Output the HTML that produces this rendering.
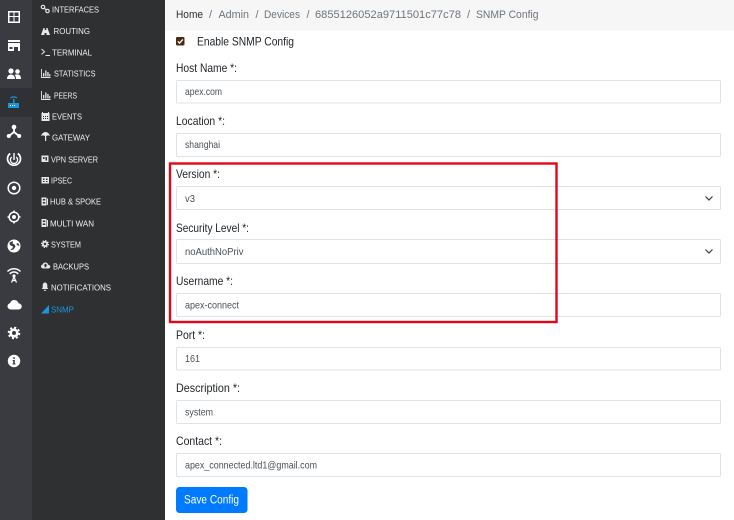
<!DOCTYPE html>
<html><head><meta charset="utf-8"><title>SNMP Config</title>
<style>
html,body{margin:0;padding:0;width:734px;height:520px;overflow:hidden;background:#fff}
svg{display:block}
text{font-family:"Liberation Sans",sans-serif}
.m{font-size:8.6px;fill:#f0f0f0}
.b{font-size:11px;fill:#6c757d}
.l{font-size:11.6px;fill:#212529}
.v{font-size:10.2px;fill:#495057}
.i{fill:#fff;stroke:#dfe3e8;stroke-width:1}
</style></head><body>
<svg width="734" height="520" viewBox="0 0 734 520" xmlns="http://www.w3.org/2000/svg">
<rect width="734" height="520" fill="#fff"/>
<rect x="0" y="0" width="32" height="520" fill="#3a3b40"/>
<rect x="32" y="0" width="133" height="520" fill="#2f3032"/>
<rect x="0" y="88" width="32" height="29" fill="#303134"/>

<!-- rail icons -->
<g fill="#fff">
<path fill-rule="evenodd" d="M8 11h12v12H8zM9.500 12.500v3.500h4v-3.500zM14.500 12.500v3.500h4v-3.500zM9.500 17v4.500h4V17zM14.500 17v4.500h4V17z"/>
<path fill-rule="evenodd" d="M8 40h12v2H8zM8 43h12v8h-2v-4h-4v4H8zM9.500 47v2h3v-2z"/>
<circle cx="11" cy="71" r="2.600"/><circle cx="17.500" cy="71.500" r="2.300"/>
<path d="M7 79c0-3 2-4.500 4-4.500s4 1.500 4 4.500zM16 79c0-2-.5-3.200-1.400-4 .9-.5 1.900-.6 2.900-.6 2 0 3.500 1.500 3.500 4.600z"/>
<path fill="#1b95db" d="M8 103h11v5H8zM13 99h1.500v4H13z"/>
<path d="M10.500 98c1.800-1.500 4.700-1.500 6.500 0" fill="none" stroke="#1b95db" stroke-width="1.300"/>
<path fill="#fff" d="M10 105h1v1h-1zM12 105h1v1h-1zM14 105h1v1h-1z"/>
<circle cx="14" cy="127" r="2.300"/><circle cx="8.800" cy="136" r="2"/><circle cx="19.200" cy="136" r="2"/>
<path d="M14 127v5M14 132l-5 4M14 132l5 4" stroke="#fff" stroke-width="1.800" fill="none"/>
<g fill="none" stroke="#fff"><path stroke-width="1.700" d="M10.200 153.500a6.500 6.500 0 1 0 7.600 0"/><path stroke-width="1.300" d="M11.800 157a3.600 3.600 0 1 0 4.400 0"/><path stroke-width="1.400" d="M14 153v7"/></g>
<circle cx="14" cy="188" r="5.800" fill="none" stroke="#fff" stroke-width="1.500"/><circle cx="14" cy="188" r="2.200"/>
<circle cx="14" cy="217" r="4.800" fill="none" stroke="#fff" stroke-width="1.500"/><circle cx="14" cy="217" r="2"/>
<path d="M14 210.500v2M14 221.500v2M7.500 217h2M18.500 217h2" stroke="#fff" stroke-width="1.500"/>
<circle cx="14" cy="246" r="6.500"/>
<path fill="#3a3b40" d="M13 241l-3.500 1.500 .5 2.500 3 1.500-.5 2-2 .5.500 1 2.500-.5 2-3-1-2-2-1zM17 243l1.500 .5 1 2.500-1.500-.5-1.500-1z"/>
<g fill="none" stroke="#fff" stroke-width="1.500"><path d="M7.500 271.500a9 9 0 0 1 13 0"/><path d="M9.800 274a5.500 5.500 0 0 1 8.400 0"/></g>
<circle cx="14" cy="276" r="1.600"/><path d="M14 277l-2.500 5.500M14 277l2.500 5.500M12 280.500h4" stroke="#fff" stroke-width="1.200" fill="none"/>
<path d="M11.300 309.500c-2.500 0-3.800-1.500-3.800-3.200 0-1.500 1-2.800 2.500-3.100.6-2 2.300-3.200 4.200-3.200 2.200 0 3.900 1.400 4.400 3.400 1.800.1 3.100 1.400 3.100 3 0 2-1.400 3.100-3.300 3.100z"/>
<circle cx="14" cy="333" r="3.300" fill="none" stroke="#fff" stroke-width="2.600"/>
<circle cx="14" cy="333" r="5.400" fill="none" stroke="#fff" stroke-width="1.800" stroke-dasharray="2.100 2.140"/>
<circle cx="14" cy="361" r="6.200"/>
<path fill="#3a3b40" d="M13.200 357.300h1.600v1.600h-1.600zM12.600 360h2.200v3.500h.7v1h-3v-1h.7v-2.500h-.6z"/>
</g>

<!-- menu icons -->
<g fill="#e8e8e8">
<circle cx="43" cy="7" r="1.700" fill="none" stroke="#e8e8e8" stroke-width="1.200"/>
<circle cx="47.500" cy="11" r="1.700" fill="none" stroke="#e8e8e8" stroke-width="1.200"/>
<path d="M44.200 8.100l2.100 1.800" stroke="#e8e8e8" stroke-width="1.100"/>
<path d="M41 35l2.500-7h1.200v2h1.600v-2h1.200l2.500 7h-3.500v-2h-2v2z"/>
<path d="M41.500 49l3 2.700-3 2.700M45.500 55.500h4.500" fill="none" stroke="#e8e8e8" stroke-width="1"/>
<path d="M41.500 69v8.500H50.500" fill="none" stroke="#e8e8e8" stroke-width=".9"/><path d="M43 73h1.300v3.500H43zM45.200 70.500h1.300v6h-1.300zM47.300 72h1.300v4.500h-1.300zM49.200 74h1.100v2.500h-1.100z"/>
<path d="M41.500 91v8.500H50.500" fill="none" stroke="#e8e8e8" stroke-width=".9"/><path d="M43 95h1.300v3.500H43zM45.200 92.500h1.300v6h-1.300zM47.300 94h1.300v4.500h-1.300zM49.200 96h1.100v2.500h-1.100z"/>
<path fill-rule="evenodd" d="M41.500 113h8v8h-8zM43 116v1h1v-1zM45 116v1h1v-1zM47 116v1h1v-1zM43 118v1h1v-1zM45 118v1h1v-1zM47 118v1h1v-1z"/>
<path d="M42.500 113.300v-1.300M48.500 113.300v-1.300" stroke="#e8e8e8"/>
<path d="M41 136c1-3 3-4 4.500-4s3.500 1 4.500 4l-2-.8-1.200 .8-1.300-.8-1.300 .8-1.200-.8z"/><path d="M45 135h1.200v6H45z"/>
<path fill-rule="evenodd" d="M41.500 155.500h7v6.500h-7zM43 157v2h1.500v-2zM45.500 157v3.500H47V157z"/>
<path fill-rule="evenodd" d="M41.500 177h7.500v6.500h-7.500zM43 178.500v1.500h1.500v-1.500zM46 178.500v1.500h1.500v-1.500zM43 181v1h1.500v-1zM46 181v1h1.500v-1z"/>
<path fill-rule="evenodd" d="M41.500 197.500h5v8h-5zM42.800 199v1.500h2.400V199zM42.800 202v1.500h2.400V202z"/><path d="M47 198.500h1v6.500h-1z"/>
<path fill-rule="evenodd" d="M41.500 219h5v8h-5zM42.800 220.500v1.500h2.400v-1.500zM42.800 223.500v1.500h2.400v-1.500z"/><path d="M47 220h1v6.500h-1z"/>
<circle cx="45" cy="244" r="2.100" fill="none" stroke="#e8e8e8" stroke-width="1.700"/>
<circle cx="45" cy="244" r="3.400" fill="none" stroke="#e8e8e8" stroke-width="1.200" stroke-dasharray="1.300 1.370"/>
<path d="M43.300 268.500c-1.500 0-2.300-.9-2.300-2 0-1 .7-1.800 1.600-2 .4-1.300 1.500-2 2.800-2 1.400 0 2.500.9 2.800 2.200 1.200.1 2.100 1 2.100 1.900 0 1.200-.9 1.900-2.100 1.900z"/>
<path fill="#2f3032" d="M45.500 263.500l2 2h-1.200v1.700h-1.600v-1.700h-1.200z"/>
<path d="M45 282.500c1.400 0 2.300 1.200 2.300 3v2l1 1.500h-6.600l1-1.500v-2c0-1.800.9-3 2.300-3zM43.800 289.800h2.400a1.200 1.200 0 0 1-2.400 0z"/>
<path fill="#1b95db" d="M41 313.500L49 305v8.500z"/>
</g>

<!-- menu labels -->
<g class="menu">
<text class="m" x="52" y="12.300" textLength="47" lengthAdjust="spacingAndGlyphs">INTERFACES</text>
<text class="m" x="53.500" y="34" textLength="36.500" lengthAdjust="spacingAndGlyphs">ROUTING</text>
<text class="m" x="52" y="55.300" textLength="40" lengthAdjust="spacingAndGlyphs">TERMINAL</text>
<text class="m" x="54" y="76.300" textLength="41.500" lengthAdjust="spacingAndGlyphs">STATISTICS</text>
<text class="m" x="54" y="98.300" textLength="23" lengthAdjust="spacingAndGlyphs">PEERS</text>
<text class="m" x="52" y="119.300" textLength="30" lengthAdjust="spacingAndGlyphs">EVENTS</text>
<text class="m" x="52" y="140.300" textLength="38" lengthAdjust="spacingAndGlyphs">GATEWAY</text>
<text class="m" x="51" y="162.300" textLength="47" lengthAdjust="spacingAndGlyphs">VPN SERVER</text>
<text class="m" x="51" y="183.300" textLength="21" lengthAdjust="spacingAndGlyphs">IPSEC</text>
<text class="m" x="50" y="204.300" textLength="51" lengthAdjust="spacingAndGlyphs">HUB &amp; SPOKE</text>
<text class="m" x="50" y="226.300" textLength="44" lengthAdjust="spacingAndGlyphs">MULTI WAN</text>
<text class="m" x="51" y="247.300" textLength="30" lengthAdjust="spacingAndGlyphs">SYSTEM</text>
<text class="m" x="53" y="269.300" textLength="36" lengthAdjust="spacingAndGlyphs">BACKUPS</text>
<text class="m" x="51" y="290.300" textLength="60" lengthAdjust="spacingAndGlyphs">NOTIFICATIONS</text>
<text class="m" x="51" y="312.300" textLength="23" lengthAdjust="spacingAndGlyphs" style="fill:#1b95db">SNMP</text>
</g>

<!-- breadcrumb -->
<rect x="165" y="0" width="569" height="30.500" fill="#f6f6f6"/>
<text class="b" x="176" y="18" textLength="27" lengthAdjust="spacingAndGlyphs" style="fill:#2b2f33">Home</text>
<text class="b" x="209" y="18">/</text>
<text class="b" x="218.500" y="18" textLength="30.500" lengthAdjust="spacingAndGlyphs">Admin</text>
<text class="b" x="255.500" y="18">/</text>
<text class="b" x="264" y="18" textLength="36" lengthAdjust="spacingAndGlyphs">Devices</text>
<text class="b" x="306.500" y="18">/</text>
<text class="b" x="315" y="18" textLength="146" lengthAdjust="spacingAndGlyphs">6855126052a9711501c77c78</text>
<text class="b" x="467" y="18">/</text>
<text class="b" x="476" y="18" textLength="62.500" lengthAdjust="spacingAndGlyphs">SNMP Config</text>

<!-- enable -->
<rect x="176" y="37" width="8.500" height="8.500" rx="1.200" fill="#4a2c14"/>
<path d="M177.800 41.300l1.800 1.900 3.200-3.800" fill="none" stroke="#fff" stroke-width="1.300"/>
<text class="l" x="197" y="45.500" textLength="97" lengthAdjust="spacingAndGlyphs">Enable SNMP Config</text>

<!-- form -->
<text class="l" x="176" y="72" textLength="61" lengthAdjust="spacingAndGlyphs">Host Name *:</text>
<rect class="i" x="176.500" y="80.500" width="544" height="22.500" rx="1"/>
<text class="v" x="185" y="95" textLength="37" lengthAdjust="spacingAndGlyphs">apex.com</text>

<text class="l" x="176" y="125" textLength="49" lengthAdjust="spacingAndGlyphs">Location *:</text>
<rect class="i" x="176.500" y="133.500" width="544" height="23" rx="1"/>
<text class="v" x="185" y="148" textLength="35" lengthAdjust="spacingAndGlyphs">shanghai</text>

<text class="l" x="176" y="178" textLength="44" lengthAdjust="spacingAndGlyphs">Version *:</text>
<rect class="i" x="176.500" y="186.500" width="544" height="23" rx="1"/>
<text class="v" x="185" y="202" textLength="10" lengthAdjust="spacingAndGlyphs">v3</text>
<path d="M705.500 196.500l3.500 3.500 3.500-3.500" fill="none" stroke="#343a40" stroke-width="1.200"/>

<text class="l" x="176" y="232" textLength="73" lengthAdjust="spacingAndGlyphs">Security Level *:</text>
<rect class="i" x="176.500" y="239.500" width="544" height="24" rx="1"/>
<text class="v" x="185" y="255" textLength="58.500" lengthAdjust="spacingAndGlyphs">noAuthNoPriv</text>
<path d="M705.500 249.500l3.500 3.500 3.500-3.500" fill="none" stroke="#343a40" stroke-width="1.200"/>

<text class="l" x="176" y="285" textLength="57" lengthAdjust="spacingAndGlyphs">Username *:</text>
<rect class="i" x="176.500" y="293.500" width="544" height="23" rx="1"/>
<text class="v" x="185" y="308.500" textLength="54" lengthAdjust="spacingAndGlyphs">apex-connect</text>

<text class="l" x="176" y="339" textLength="29" lengthAdjust="spacingAndGlyphs">Port *:</text>
<rect class="i" x="176.500" y="347.500" width="544" height="22.500" rx="1"/>
<text class="v" x="185" y="362" textLength="15" lengthAdjust="spacingAndGlyphs">161</text>

<text class="l" x="176" y="392" textLength="64" lengthAdjust="spacingAndGlyphs">Description *:</text>
<rect class="i" x="176.500" y="400.500" width="544" height="23" rx="1"/>
<text class="v" x="185" y="415.500" textLength="28" lengthAdjust="spacingAndGlyphs">system</text>

<text class="l" x="176" y="445" textLength="46" lengthAdjust="spacingAndGlyphs">Contact *:</text>
<rect class="i" x="176.500" y="453.500" width="544" height="23" rx="1"/>
<text class="v" x="185" y="468.500" textLength="132" lengthAdjust="spacingAndGlyphs">apex_connected.ltd1@gmail.com</text>

<rect x="176" y="487" width="71.500" height="26" rx="3.500" fill="#007bff"/>
<text x="184" y="503.500" font-size="11.500" fill="#fff" textLength="55" lengthAdjust="spacingAndGlyphs">Save Config</text>

<!-- red annotation -->
<rect x="170" y="163.500" width="386.500" height="158.500" fill="none" stroke="#e2071b" stroke-width="2.400"/>
</svg>
</body></html>
